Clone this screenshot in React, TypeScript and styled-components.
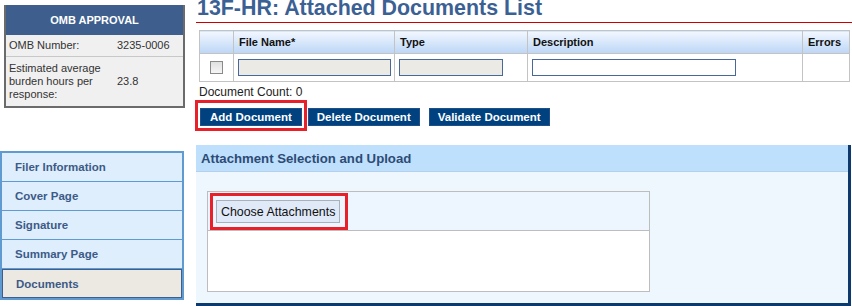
import styled, { createGlobalStyle } from 'styled-components';

const GlobalStyle = createGlobalStyle`
  html, body {
    margin: 0;
    padding: 0;
    background: #ffffff;
    overflow: hidden;
  }
  body {
    font-family: "Liberation Sans", Arial, sans-serif;
    font-size: 12px;
    color: #222;
  }
`

const Page = styled.div`
  display: flex;
  width: 852px;
  height: 306px;
  overflow: hidden;
`

const Sidebar = styled.aside`
  width: 186px;
  flex: 0 0 186px;
  display: flex;
  flex-direction: column;
`

const OmbBox = styled.div`
  margin: 5px 0 0 4px;
  width: 177px;
  border: 2px solid #6b6b6b;
  border-top: none;
  background: #f0f0f0;
`

const OmbHeader = styled.div`
  height: 30px;
  background: #3e5f8e;
  color: #ffffff;
  font-weight: bold;
  font-size: 11px;
  display: flex;
  align-items: center;
  justify-content: center;
`

const OmbRow = styled.div`
  display: grid;
  grid-template-columns: 108px 1fr;
  align-items: center;
  padding: 0 0 0 3px;
  border-top: ${p => (p.$first ? 'none' : '1px solid #c8c8c8')};
  min-height: ${p => p.$tall}px;
  font-size: 11px;
  line-height: 13px;
  color: #333;
`

const NavList = styled.nav`
  margin-top: 43px;
  width: 180px;
  border: 2px solid #5f9ad0;
  background: #5f9ad0;
  display: flex;
  flex-direction: column;
  gap: 1px;
`

const NavItem = styled.div`
  height: ${p => (p.$active ? 27 : 28)}px;
  display: flex;
  align-items: center;
  padding-left: 13px;
  font-size: 11.5px;
  font-weight: bold;
  color: #3d5a87;
  background: ${p => (p.$active ? '#ebe9e2' : '#deeefd')};
  border: ${p => (p.$active ? '1px solid #3e5f8e' : 'none')};
`

const Main = styled.main`
  margin-left: 10px;
  flex: 1;
  display: flex;
  flex-direction: column;
`

const Title = styled.h1`
  margin: -4px 0 0;
  height: 27px;
  font-size: 21.4px;
  line-height: 24px;
  font-weight: bold;
  color: #3b6194;
  border-bottom: 1px solid #cc0000;
  box-sizing: border-box;
  padding-left: 1px;
`

const Table = styled.table`
  margin: 7px 0 0 3px;
  width: 650px;
  border-collapse: collapse;
  table-layout: fixed;
`

const Th = styled.th`
  height: 22px;
  padding: 0 0 0 5px;
  text-align: left;
  font-size: 11px;
  font-weight: bold;
  color: #111;
  border: 1px solid #c3c3c3;
  background: linear-gradient(to bottom, #f2f7ff 0%, #bcd6f6 100%);
`

const Td = styled.td`
  height: 27px;
  padding: 0 0 0 4px;
  border: 1px solid #c3c3c3;
  vertical-align: middle;
`

const CheckBox = styled.span`
  display: block;
  width: 11px;
  height: 11px;
  margin-left: 6px;
  border: 1px solid #8a8a8a;
  background: linear-gradient(to bottom, #e0e0e0, #f6f6f6);
`

const TextInput = styled.div`
  width: ${p => p.$w}px;
  height: 15px;
  border: 1px solid #48689a;
  background: ${p => (p.$filled ? '#ebeae5' : '#ffffff')};
`

const CountLine = styled.div`
  margin: 3px 0 0 3px;
  font-size: 12px;
  line-height: 14px;
  color: #222;
`

const ButtonRow = styled.div`
  display: flex;
  align-items: flex-end;
  gap: 9px;
  margin: 1px 0 0 -1px;
`

const Highlight = styled.div`
  border: 3px solid #e8202a;
  padding: ${p => p.$pad};
  display: inline-flex;
  margin: ${p => p.$margin || '0'};
`

const BlueButton = styled.div`
  height: 16px;
  padding: 0 ${p => p.$pad}px;
  display: flex;
  align-items: center;
  background: #00427f;
  border: 1px solid #1f4f86;
  color: #ffffff;
  font-size: 11.5px;
  font-weight: bold;
  white-space: nowrap;
`

const Panel = styled.section`
  margin-top: 19px;
  width: 655px;
  flex: 1;
  background: #eef6fe;
  border-right: 3px solid #0c3a6e;
  border-bottom: 3px solid #0c3a6e;
  box-sizing: border-box;
  display: flex;
  flex-direction: column;
`

const PanelHeader = styled.div`
  height: 26px;
  background: #bee0fd;
  border-bottom: 1px solid #b4d0ea;
  display: flex;
  align-items: center;
  padding-left: 5px;
  font-size: 13.2px;
  font-weight: bold;
  color: #2d4b75;
`

const UploadBox = styled.div`
  margin: 19px 0 0 11px;
  width: 443px;
  height: 101px;
  box-sizing: border-box;
  border: 1px solid #bdbdbd;
  background: #ffffff;
  display: flex;
  flex-direction: column;
`

const UploadBar = styled.div`
  background: #edf5fe;
  border-bottom: 1px solid #bdbdbd;
  display: flex;
  align-items: flex-start;
  padding: 1px 0 0 2px;
`

const GrayButton = styled.div`
  height: 21px;
  padding: 0 4px;
  display: flex;
  align-items: center;
  background: #dfe9f7;
  border: 1px solid #a9b0ba;
  color: #111;
  font-size: 12.4px;
  white-space: nowrap;
`

const navItems = ['Filer Information', 'Cover Page', 'Signature', 'Summary Page', 'Documents']

export default function App() {
  return (
    <>
      <GlobalStyle />
      <Page>
        <Sidebar>
          <OmbBox>
            <OmbHeader>OMB APPROVAL</OmbHeader>
            <OmbRow $first $tall={21}>
              <span>OMB Number:</span>
              <span>3235-0006</span>
            </OmbRow>
            <OmbRow $tall={49}>
              <span>Estimated average burden hours per response:</span>
              <span>23.8</span>
            </OmbRow>
          </OmbBox>

          <NavList>
            {navItems.map(item => (
              <NavItem key={item} $active={item === 'Documents'}>{item}</NavItem>
            ))}
          </NavList>
        </Sidebar>

        <Main>
          <Title>13F-HR: Attached Documents List</Title>

          <Table>
            <colgroup>
              <col style={{ width: 34 }} />
              <col style={{ width: 161 }} />
              <col style={{ width: 133 }} />
              <col style={{ width: 275 }} />
              <col style={{ width: 47 }} />
            </colgroup>
            <thead>
              <tr>
                <Th></Th>
                <Th>File Name*</Th>
                <Th>Type</Th>
                <Th>Description</Th>
                <Th>Errors</Th>
              </tr>
            </thead>
            <tbody>
              <tr>
                <Td><CheckBox /></Td>
                <Td><TextInput $w={151} $filled /></Td>
                <Td><TextInput $w={102} $filled /></Td>
                <Td><TextInput $w={202} /></Td>
                <Td></Td>
              </tr>
            </tbody>
          </Table>

          <CountLine>Document Count: 0</CountLine>

          <ButtonRow>
            <Highlight $pad="5px 2px 2px" $margin="0 -8px -5px 0">
              <BlueButton $pad={9}>Add Document</BlueButton>
            </Highlight>
            <BlueButton $pad={8}>Delete Document</BlueButton>
            <BlueButton $pad={8}>Validate Document</BlueButton>
          </ButtonRow>

          <Panel>
            <PanelHeader>Attachment Selection and Upload</PanelHeader>
            <UploadBox>
              <UploadBar>
                <Highlight $pad="4px 5px 4px 3px">
                  <GrayButton>Choose Attachments</GrayButton>
                </Highlight>
              </UploadBar>
            </UploadBox>
          </Panel>
        </Main>
      </Page>
    </>
  )
}
